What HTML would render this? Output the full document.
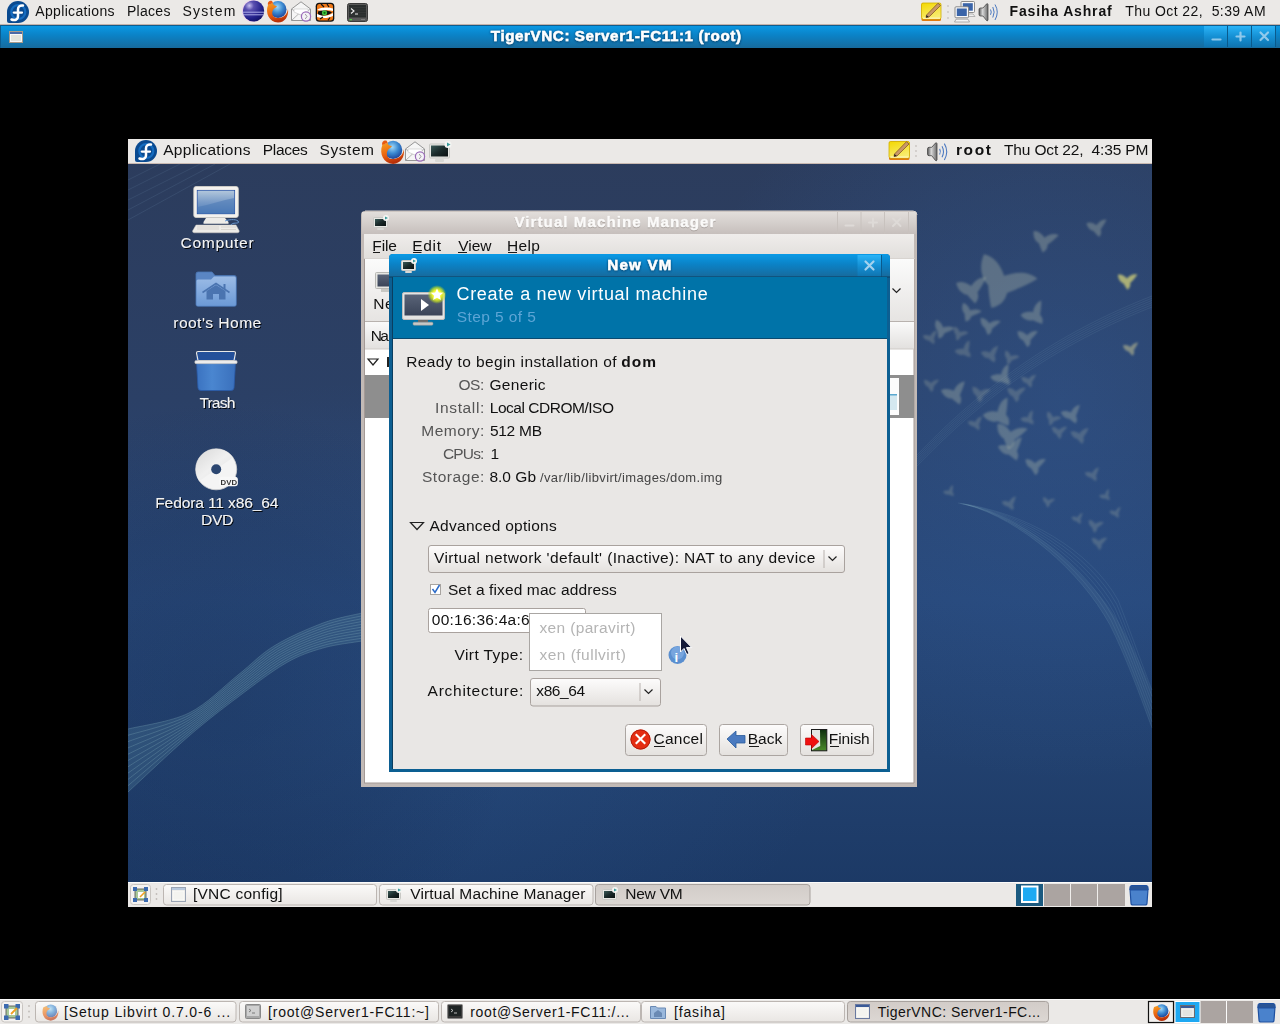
<!DOCTYPE html>
<html><head><meta charset="utf-8"><style>
html,body{margin:0;padding:0;background:#000;width:1280px;height:1024px;overflow:hidden}
svg{display:block}
text{font-family:"Liberation Sans",sans-serif}
</style></head><body>
<svg width="1280" height="1024" viewBox="0 0 1280 1024">
<defs>
  <linearGradient id="vncTitle" x1="0" y1="0" x2="0" y2="1">
    <stop offset="0" stop-color="#0a9ae6"/><stop offset="0.45" stop-color="#0b82c6"/><stop offset="1" stop-color="#176a9c"/>
  </linearGradient>
  <linearGradient id="vncBtn" x1="0" y1="0" x2="0" y2="1">
    <stop offset="0" stop-color="#2ab4f8"/><stop offset="0.5" stop-color="#1590d4"/><stop offset="1" stop-color="#0f74b0"/>
  </linearGradient>
  <linearGradient id="vmmTitle" x1="0" y1="0" x2="0" y2="1">
    <stop offset="0" stop-color="#e2dedb"/><stop offset="1" stop-color="#c6bfbc"/>
  </linearGradient>
  <linearGradient id="menuG" x1="0" y1="0" x2="0" y2="1">
    <stop offset="0" stop-color="#efedeb"/><stop offset="1" stop-color="#e1dedb"/>
  </linearGradient>
  <linearGradient id="toolG" x1="0" y1="0" x2="0" y2="1">
    <stop offset="0" stop-color="#fbfbfb"/><stop offset="1" stop-color="#e6e4e2"/>
  </linearGradient>
  <linearGradient id="hdrG" x1="0" y1="0" x2="0" y2="1">
    <stop offset="0" stop-color="#fafafa"/><stop offset="1" stop-color="#e2e0de"/>
  </linearGradient>
  <linearGradient id="btnG" x1="0" y1="0" x2="0" y2="1">
    <stop offset="0" stop-color="#fdfcfc"/><stop offset="1" stop-color="#e4e1de"/>
  </linearGradient>
  <linearGradient id="taskG" x1="0" y1="0" x2="0" y2="1">
    <stop offset="0" stop-color="#fbfaf9"/><stop offset="1" stop-color="#e9e6e3"/>
  </linearGradient>
  <linearGradient id="taskAct" x1="0" y1="0" x2="0" y2="1">
    <stop offset="0" stop-color="#d2ccc8"/><stop offset="1" stop-color="#dcd7d3"/>
  </linearGradient>
  <linearGradient id="wp1" x1="0" y1="0" x2="0" y2="1">
    <stop offset="0" stop-color="#2c3c5c"/><stop offset="0.34" stop-color="#2b4066"/><stop offset="0.6" stop-color="#274676"/><stop offset="0.8" stop-color="#22416f"/><stop offset="1" stop-color="#1b3864"/>
  </linearGradient>
  <radialGradient id="wp2" cx="0.25" cy="0.75" r="0.45">
    <stop offset="0" stop-color="#3060a0" stop-opacity="0.25"/><stop offset="1" stop-color="#3060a0" stop-opacity="0"/>
  </radialGradient>
  <radialGradient id="wp3" gradientUnits="userSpaceOnUse" cx="1060" cy="400" r="380">
    <stop offset="0" stop-color="#3468b0" stop-opacity="0.32"/><stop offset="0.6" stop-color="#3468b0" stop-opacity="0.15"/><stop offset="1" stop-color="#3468b0" stop-opacity="0"/>
  </radialGradient>
  <filter id="noise" x="0" y="0" width="100%" height="100%">
    <feTurbulence type="fractalNoise" baseFrequency="0.9" numOctaves="2" seed="3" result="n"/>
    <feColorMatrix type="matrix" values="0 0 0 0 0.5  0 0 0 0 0.6  0 0 0 0 0.8  0 0 0 0.12 0"/>
  </filter>
  <linearGradient id="monScr" x1="0" y1="0" x2="1" y2="1">
    <stop offset="0" stop-color="#3a5a58"/><stop offset="0.5" stop-color="#1a2a2a"/><stop offset="1" stop-color="#0a1010"/>
  </linearGradient>
  <linearGradient id="bigScr" x1="0" y1="0" x2="0" y2="1">
    <stop offset="0" stop-color="#5a6478"/><stop offset="1" stop-color="#3a4458"/>
  </linearGradient>
  <radialGradient id="glow" cx="0.5" cy="0.5" r="0.5">
    <stop offset="0" stop-color="#ffff80"/><stop offset="0.45" stop-color="#f4f830"/><stop offset="0.72" stop-color="#d0e820" stop-opacity="0.7"/><stop offset="1" stop-color="#a0d020" stop-opacity="0"/>
  </radialGradient>
  <radialGradient id="eclG" cx="0.3" cy="0.25" r="0.85">
    <stop offset="0" stop-color="#c8c0f0"/><stop offset="0.25" stop-color="#5a50b0"/><stop offset="0.7" stop-color="#22208a"/><stop offset="1" stop-color="#101060"/>
  </radialGradient>
  <radialGradient id="ffGlobe" cx="0.45" cy="0.35" r="0.7">
    <stop offset="0" stop-color="#a0d8f8"/><stop offset="0.5" stop-color="#3a88d0"/><stop offset="1" stop-color="#1a3a90"/>
  </radialGradient>
  <linearGradient id="ffFox" x1="0" y1="0" x2="0.3" y2="1">
    <stop offset="0" stop-color="#f8a020"/><stop offset="0.6" stop-color="#e86010"/><stop offset="1" stop-color="#b83008"/>
  </linearGradient>
  <linearGradient id="compScr" x1="0" y1="0" x2="0" y2="1">
    <stop offset="0" stop-color="#b4c8dc"/><stop offset="0.5" stop-color="#7a9cc8"/><stop offset="1" stop-color="#4a7ab8"/>
  </linearGradient>
  <linearGradient id="folderG" x1="0" y1="0" x2="0" y2="1">
    <stop offset="0" stop-color="#9cbce6"/><stop offset="1" stop-color="#6c9ad6"/>
  </linearGradient>
  <linearGradient id="trashG" x1="0" y1="0" x2="1" y2="0">
    <stop offset="0" stop-color="#3a72c0"/><stop offset="0.4" stop-color="#4a86d0"/><stop offset="1" stop-color="#3a70bc"/>
  </linearGradient>
  <linearGradient id="dvdG" x1="0" y1="0" x2="1" y2="1">
    <stop offset="0" stop-color="#d8d8d8"/><stop offset="0.5" stop-color="#f0f0f0"/><stop offset="1" stop-color="#e0e0e0"/>
  </linearGradient>
  <linearGradient id="notesG" x1="0" y1="0" x2="0.4" y2="1">
    <stop offset="0" stop-color="#f4d800"/><stop offset="1" stop-color="#f8ec70"/>
  </linearGradient>
  <linearGradient id="spkG" x1="0" y1="0" x2="1" y2="0">
    <stop offset="0" stop-color="#5a5a5a"/><stop offset="0.4" stop-color="#d8d8d8"/><stop offset="1" stop-color="#6a6a6a"/>
  </linearGradient>
  <radialGradient id="wpDarkL" gradientUnits="userSpaceOnUse" cx="220" cy="700" r="300">
    <stop offset="0" stop-color="#102040" stop-opacity="0.25"/><stop offset="0.6" stop-color="#102040" stop-opacity="0.15"/><stop offset="1" stop-color="#102040" stop-opacity="0"/>
  </radialGradient>
  <linearGradient id="doorG" x1="0" y1="0" x2="0" y2="1">
    <stop offset="0" stop-color="#0e2e0e"/><stop offset="1" stop-color="#4a8a2a"/>
  </linearGradient>
  <filter id="soft"><feGaussianBlur stdDeviation="0.8"/></filter>
  <filter id="tshadow" x="-5%" y="-30%" width="110%" height="160%">
    <feDropShadow dx="0" dy="0.5" stdDeviation="0.8" flood-color="#002040" flood-opacity="0.8"/>
  </filter>
  <filter id="gshadow" x="-5%" y="-30%" width="110%" height="160%">
    <feDropShadow dx="0" dy="0.5" stdDeviation="0.7" flood-color="#8a817c" flood-opacity="1"/>
  </filter>
  <filter id="dshadow" x="-5%" y="-30%" width="110%" height="160%">
    <feDropShadow dx="1" dy="1" stdDeviation="0.5" flood-color="#000" flood-opacity="0.9"/>
  </filter>
  <g id="vmIcon">
    <!-- 16x16 monitor w/ play badge -->
    <rect x="0.5" y="2.5" width="14" height="10" rx="1" fill="#e8e8e4" stroke="#c8c8c4"/>
    <rect x="2" y="4" width="11" height="7" fill="url(#monScr)"/>
    <rect x="4" y="13" width="7" height="2" rx="1" fill="#d8d8d4"/>
    <circle cx="13" cy="3" r="3" fill="#f4f4f2"/>
    <path d="M12 1.5 L15 3 L12 4.5 Z" fill="#3a9a9a"/>
  </g>
</defs>

<rect width="1280" height="1024" fill="#000"/>

<!-- ================= OUTER TOP PANEL ================= -->
<rect x="0" y="0" width="1280" height="24" fill="#ebe9e7"/>
<rect x="0" y="24" width="1280" height="1" fill="#c4b2aa"/>
<g id="fedoraOuter" transform="translate(7,1)">
  <path d="M11 0 A11 11 0 1 1 11 22 L2 22 A2 2 0 0 1 0 20 L0 11 A11 11 0 0 1 11 0 Z" fill="#0a4a90"/>
  <circle cx="11.3" cy="11" r="7" fill="none" stroke="#1a78d0" stroke-width="2.2" stroke-opacity="0.75"/>
  <path d="M4.5 18.5 C7.5 19.8 11 19 11 15 V8.2 C11 5.5 13 4.2 16 4.6" fill="none" stroke="#fff" stroke-width="2.5" stroke-linecap="round"/>
  <path d="M6.8 11.6 H15" stroke="#fff" stroke-width="2.3" stroke-linecap="round"/>
</g>
<!-- launcher icons -->
<g transform="translate(253,11)">
  <circle r="11" fill="#f0c8f0" fill-opacity="0.7"/>
  <circle cx="0.6" cy="0" r="10.6" fill="url(#eclG)"/>
  <path d="M-10.5 1.2 H11 M-10 3.8 H10.8" stroke="#b8b8f0" stroke-width="0.9"/>
</g>
<g transform="translate(277,11)">
  <circle cx="1" cy="-1.5" r="8.5" fill="url(#ffGlobe)"/>
  <path d="M-9 -6 C-12 2 -8 11 1 11.5 C8 11.5 12 5 11 -2 C10 4 6 7 1 7 C-4 7 -6 3 -4 -1 C-3 -3 -1 -3 0 -5 C-2 -5 -4 -6 -4 -8 C-6 -7 -8 -7 -9 -6 Z" fill="url(#ffFox)"/>
  <path d="M-9 -6 C-10 -9 -7 -11 -5 -10 L-4 -8 Z" fill="#e85a10"/>
</g>
<g transform="translate(291,1)">
  <path d="M0.5 8 L10 0.8 L19.5 8 V19.5 H0.5 Z" fill="#f6f6f6" stroke="#8a8a8a" stroke-width="0.9"/>
  <path d="M0.5 8 L10 14 L19.5 8 M0.5 19.5 L8 12.5" fill="none" stroke="#a0a0a0" stroke-width="0.8"/>
  <path d="M3 8 H17 V11 L10 14 L3 11 Z" fill="#fff" stroke="#c8c8c8" stroke-width="0.6"/>
  <circle cx="15" cy="15.5" r="4.6" fill="#f4f2f6" stroke="#9a6ab8" stroke-width="1.2"/>
  <path d="M14.2 13 L16 15.5 L14.2 18" fill="none" stroke="#888" stroke-width="0.8"/>
</g>
<g transform="translate(315,2)">
  <rect x="0.7" y="0.7" width="18.6" height="19" rx="3.5" fill="#111"/>
  <rect x="2" y="2" width="16" height="16.4" rx="2.5" fill="#f07818"/>
  <path d="M2 8 C6 5 13 5 18 6.5 L18 9 C14 8 11 8 8 9 Z" fill="#fff"/>
  <path d="M2 12 C5 13 8 14 12 13.5 C14 13 16 12 18 11 L18 14 C14 16 8 17 2 15 Z" fill="#fff"/>
  <path d="M3 9.5 C7 8 13 8 17 10.5 C13 14 7 14.5 3 12 Z" fill="#111"/>
  <circle cx="9.5" cy="10.8" r="2.6" fill="#40c040"/>
  <circle cx="9.5" cy="10.8" r="1.1" fill="#107010"/>
  <path d="M6 2 L9 5 M12 2 L14 5 M5 17 L8 15 M13 18.4 L15 15.5" stroke="#111" stroke-width="1.2"/>
</g>
<g transform="translate(347,3)">
  <rect x="0.5" y="0.5" width="20" height="18" rx="2" fill="#5a5a5a" stroke="#3a3a3a"/>
  <rect x="2" y="2" width="17" height="12.5" fill="#2a2e2e"/>
  <path d="M2 4.5 H19 M2 7 H19 M2 9.5 H19 M2 12 H19" stroke="#3a3e3e" stroke-width="0.6"/>
  <path d="M4 5.5 L7 8 L4 10.5 M8 11 H11" stroke="#f0f0f0" stroke-width="1.1" fill="none"/>
  <rect x="2.5" y="16" width="2.5" height="1.3" fill="#50d040"/>
  <rect x="14" y="16" width="4" height="0.8" fill="#888"/>
</g>
<!-- notes icon -->
<g id="notesIco" transform="translate(921,2)">
  <rect x="0.5" y="1" width="19.5" height="18" rx="1.5" fill="#e07a10"/>
  <rect x="0.5" y="1" width="19.5" height="16" rx="1.5" fill="url(#notesG)" stroke="#d0b000" stroke-width="0.8"/>
  <rect x="2" y="15.6" width="17" height="1.2" fill="#fff8c0"/>
  <path d="M5.5 13 L17 1.2 L19.5 3.5 L8 15 L5 15.5 Z" fill="#c89868" stroke="#7a4a20" stroke-width="0.7"/>
  <path d="M5.5 13 L5 15.5 L7.8 15" fill="#222"/>
</g>
<circle cx="948" cy="6" r="0.9" fill="#c8c4c0"/><circle cx="948" cy="12" r="0.9" fill="#c8c4c0"/><circle cx="948" cy="18" r="0.9" fill="#c8c4c0"/>
<g transform="translate(954,1)">
  <rect x="7" y="0.5" width="13.5" height="11" rx="1" fill="#f8f8f8" stroke="#808080" stroke-width="0.9"/>
  <rect x="8.8" y="2.2" width="10" height="7.5" fill="#3a64a8"/>
  <path d="M10 13 H19 L21 15.5 H12 Z" fill="#f0f0f0" stroke="#909090" stroke-width="0.6"/>
  <rect x="1" y="5.8" width="13.5" height="11" rx="1" fill="#f8f8f8" stroke="#808080" stroke-width="0.9"/>
  <rect x="2.8" y="7.5" width="10" height="7.5" fill="#3a64a8"/>
  <path d="M0.5 21 L2 18.2 H14 L15.5 21 Z" fill="#f4f4f4" stroke="#909090" stroke-width="0.7"/>
</g>
<g id="volIco" transform="translate(978,2)">
  <path d="M1 7.5 Q1 6 2.5 6 H5 L8.5 2 Q9.5 1 10 2.5 V18 Q9.5 19.5 8.5 18.5 L5 14 H2.5 Q1 14 1 12.5 Z" fill="url(#spkG)" stroke="#3a3a3a" stroke-width="0.7"/>
  <path d="M12.5 7.5 Q14 10 12.5 12.8 M14.8 5 Q17.5 10 14.8 15.5 M17 2.5 Q21.5 10 17 18" fill="none" stroke="#4a78c0" stroke-width="1"/>
</g>
<!-- ================= TIGERVNC TITLE ================= -->
<rect x="0" y="25" width="1280" height="23" fill="url(#vncTitle)"/>
<rect x="0" y="25" width="1280" height="1" fill="#0e5c8e"/>
<rect x="0" y="25" width="1" height="23" fill="#0e5c8e"/>
<g transform="translate(9,31)">
  <rect x="0.5" y="0.5" width="13" height="11" fill="#dcdcd4" stroke="#a89a8a"/>
  <rect x="1" y="1" width="12" height="2" fill="#4a6aa8"/>
  <rect x="1.5" y="3.5" width="11" height="7" fill="#e4e4dc" stroke="#fff" stroke-width="0.8"/>
</g>
<rect x="1204" y="26" width="71" height="21" fill="url(#vncBtn)"/>
<rect x="1227" y="26" width="1" height="21" fill="#0a5a8c"/>
<rect x="1251" y="26" width="1" height="21" fill="#0a5a8c"/>
<rect x="1275" y="26" width="1" height="21" fill="#0a5a8c"/>
<g stroke="#a4d2ee" stroke-opacity="0.85" stroke-width="2.2" stroke-linecap="round" fill="none">
  <path d="M1212.5 39.5 H1220.5"/>
  <path d="M1236.5 36.5 H1244.5 M1240.5 32.5 V40.5"/>
  <path d="M1260.5 32.5 L1268 40 M1268 32.5 L1260.5 40"/>
</g>

<!-- ================= INNER DESKTOP ================= -->
<g id="desk">
<rect x="128" y="139" width="1024" height="768" fill="url(#wp1)"/>
<rect x="128" y="164" width="1024" height="718" fill="url(#wp2)"/>
<rect x="128" y="164" width="1024" height="718" fill="url(#wp3)"/>
<!-- swirl ribbons -->
<rect x="128" y="164" width="1024" height="718" fill="url(#wpDarkL)"/>
<path d="M128.0 729.0 C138.2 726.3 170.7 722.0 189.0 713.0 C207.3 704.0 223.8 686.2 238.0 675.0 C252.2 663.8 259.8 654.7 274.0 646.0 C288.2 637.3 308.3 628.5 323.0 623.0 C337.7 617.5 355.5 614.7 362.0 613.0 L362.0 641.0 C355.5 642.2 335.7 644.3 323.0 648.0 C310.3 651.7 300.2 654.8 286.0 663.0 C271.8 671.2 254.2 684.8 238.0 697.0 C221.8 709.2 207.3 720.2 189.0 736.0 C170.7 751.8 138.2 782.7 128.0 792.0 Z" fill="#6aa0b4" fill-opacity="0.2"/>
<g fill="none" stroke="#90c0c8" stroke-opacity="0.42" stroke-width="0.6">
<path d="M128.0 729.0 C138.2 726.3 170.7 722.0 189.0 713.0 C207.3 704.0 223.8 686.2 238.0 675.0 C252.2 663.8 259.8 654.7 274.0 646.0 C288.2 637.3 308.3 628.5 323.0 623.0 C337.7 617.5 355.5 614.7 362.0 613.0"/>
<path d="M128.0 735.3 C138.2 732.0 170.7 725.0 189.0 715.3 C207.3 705.6 223.6 688.5 238.0 677.2 C252.4 665.9 261.0 656.3 275.2 647.7 C289.4 639.1 308.5 630.8 323.0 625.5 C337.5 620.2 355.5 617.4 362.0 615.8"/>
<path d="M128.0 741.6 C138.2 737.6 170.7 728.0 189.0 717.6 C207.3 707.2 223.4 690.8 238.0 679.4 C252.6 668.0 262.2 658.0 276.4 649.4 C290.6 640.8 308.7 633.1 323.0 628.0 C337.3 622.9 355.5 620.2 362.0 618.6"/>
<path d="M128.0 747.9 C138.2 743.2 170.7 730.9 189.0 719.9 C207.3 708.9 223.2 693.1 238.0 681.6 C252.8 670.1 263.4 659.6 277.6 651.1 C291.8 642.6 308.9 635.5 323.0 630.5 C337.1 625.5 355.5 622.9 362.0 621.4"/>
<path d="M128.0 754.2 C138.2 748.9 170.7 733.9 189.0 722.2 C207.3 710.5 223.0 695.4 238.0 683.8 C253.0 672.2 264.6 661.3 278.8 652.8 C293.0 644.3 309.1 637.8 323.0 633.0 C336.9 628.2 355.5 625.7 362.0 624.2"/>
<path d="M128.0 760.5 C138.2 754.5 170.7 736.9 189.0 724.5 C207.3 712.1 222.8 697.7 238.0 686.0 C253.2 674.3 265.8 662.9 280.0 654.5 C294.2 646.1 309.3 640.1 323.0 635.5 C336.7 630.9 355.5 628.4 362.0 627.0"/>
<path d="M128.0 766.8 C138.2 760.1 170.7 739.9 189.0 726.8 C207.3 713.7 222.6 700.0 238.0 688.2 C253.4 676.4 267.0 664.6 281.2 656.2 C295.4 647.8 309.5 642.4 323.0 638.0 C336.5 633.6 355.5 631.2 362.0 629.8"/>
<path d="M128.0 773.1 C138.2 765.8 170.7 742.9 189.0 729.1 C207.3 715.3 222.4 702.3 238.0 690.4 C253.6 678.5 268.2 666.2 282.4 657.9 C296.6 649.6 309.7 644.7 323.0 640.5 C336.3 636.3 355.5 633.9 362.0 632.6"/>
<path d="M128.0 779.4 C138.2 771.4 170.7 745.9 189.0 731.4 C207.3 716.9 222.2 704.6 238.0 692.6 C253.8 680.6 269.4 667.9 283.6 659.6 C297.8 651.3 309.9 647.0 323.0 643.0 C336.1 639.0 355.5 636.7 362.0 635.4"/>
<path d="M128.0 785.7 C138.2 777.0 170.7 748.9 189.0 733.7 C207.3 718.6 222.0 706.9 238.0 694.8 C254.0 682.7 270.6 669.5 284.8 661.3 C299.0 653.1 310.1 649.4 323.0 645.5 C335.9 641.6 355.5 639.4 362.0 638.2"/>
<path d="M128.0 792.0 C138.2 782.7 170.7 751.8 189.0 736.0 C207.3 720.2 221.8 709.2 238.0 697.0 C254.2 684.8 271.8 671.2 286.0 663.0 C300.2 654.8 310.3 651.7 323.0 648.0 C335.7 644.3 355.5 642.2 362.0 641.0"/>
</g>
<g fill="none" stroke="#9ac0d0" stroke-opacity="0.14" stroke-width="0.7">
<path d="M917 455.0 C970 400.0 1040 340.0 1152 296.0"/>
<path d="M917 457.2 C970 402.2 1040 342.2 1152 298.2"/>
<path d="M917 459.4 C970 404.4 1040 344.4 1152 300.4"/>
<path d="M917 461.6 C970 406.6 1040 346.6 1152 302.6"/>
<path d="M917 463.8 C970 408.8 1040 348.8 1152 304.8"/>
<path d="M917 466.0 C970 411.0 1040 351.0 1152 307.0"/>
</g>
<g fill="none" stroke="#8ab0d0" stroke-opacity="0.16" stroke-width="0.8"><path d="M128 180 L160 164 M128 190 L180 164 M128 200 L200 164 M128 210 L215 164 M128 220 L230 164"/></g>
<!-- right swoosh -->
<path d="M968 505 C1020 520 1080 570 1110 625 C1125 655 1138 690 1152 728 L1152 690 C1135 650 1118 615 1095 590 C1060 548 1015 515 968 505 Z" fill="#7aa8b8" fill-opacity="0.12"/>
<g fill="none" stroke="#90bcc8" stroke-opacity="0.2" stroke-width="0.6">
<path d="M968.0 505.0 C1020.0 520.0 1080.0 570.0 1110.0 625.0 C1125.0 655.0 1138.0 690.0 1152 728.0"/>
<path d="M966.3 504.7 C1020.8 518.7 1081.7 566.7 1111.3 620.8 C1125.8 650.8 1138.7 685.8 1152 721.7"/>
<path d="M964.7 504.3 C1021.7 517.3 1083.3 563.3 1112.7 616.7 C1126.7 646.7 1139.3 681.7 1152 715.3"/>
<path d="M963.0 504.0 C1022.5 516.0 1085.0 560.0 1114.0 612.5 C1127.5 642.5 1140.0 677.5 1152 709.0"/>
<path d="M961.3 503.7 C1023.3 514.7 1086.7 556.7 1115.3 608.3 C1128.3 638.3 1140.7 673.3 1152 702.7"/>
<path d="M959.7 503.3 C1024.2 513.3 1088.3 553.3 1116.7 604.2 C1129.2 634.2 1141.3 669.2 1152 696.3"/>
<path d="M958.0 503.0 C1025.0 512.0 1090.0 550.0 1118.0 600.0 C1130.0 630.0 1142.0 665.0 1152 690.0"/>
</g>
<!-- birds -->
<g filter="url(#soft)">
<path d="M-20 -9 C-14 -12 -6 -9 -1 -5 C3 -11 10 -17 18 -16 C15 -9 11 -3 7 3 C9 8 8 13 4 17 C0 13 -3 10 -6 6 C-12 5 -18 0 -20 -9 Z" transform="translate(1044,241) rotate(20) scale(0.658)" fill="#b0baa8" fill-opacity="0.36"/>
<path d="M-20 -9 C-14 -12 -6 -9 -1 -5 C3 -11 10 -17 18 -16 C15 -9 11 -3 7 3 C9 8 8 13 4 17 C0 13 -3 10 -6 6 C-12 5 -18 0 -20 -9 Z" transform="translate(1097,228) rotate(0) scale(0.526)" fill="#b0baa8" fill-opacity="0.36"/>
<path d="M-20 -9 C-14 -12 -6 -9 -1 -5 C3 -11 10 -17 18 -16 C15 -9 11 -3 7 3 C9 8 8 13 4 17 C0 13 -3 10 -6 6 C-12 5 -18 0 -20 -9 Z" transform="translate(1001,283) rotate(35) scale(1.526)" fill="#b0baa8" fill-opacity="0.36"/>
<path d="M-20 -9 C-14 -12 -6 -9 -1 -5 C3 -11 10 -17 18 -16 C15 -9 11 -3 7 3 C9 8 8 13 4 17 C0 13 -3 10 -6 6 C-12 5 -18 0 -20 -9 Z" transform="translate(972,290) rotate(0) scale(0.789)" fill="#b0baa8" fill-opacity="0.36"/>
<path d="M-20 -9 C-14 -12 -6 -9 -1 -5 C3 -11 10 -17 18 -16 C15 -9 11 -3 7 3 C9 8 8 13 4 17 C0 13 -3 10 -6 6 C-12 5 -18 0 -20 -9 Z" transform="translate(942,330) rotate(35) scale(0.526)" fill="#b0baa8" fill-opacity="0.36"/>
<path d="M-20 -9 C-14 -12 -6 -9 -1 -5 C3 -11 10 -17 18 -16 C15 -9 11 -3 7 3 C9 8 8 13 4 17 C0 13 -3 10 -6 6 C-12 5 -18 0 -20 -9 Z" transform="translate(959,334) rotate(35) scale(0.395)" fill="#b0baa8" fill-opacity="0.26"/>
<path d="M-20 -9 C-14 -12 -6 -9 -1 -5 C3 -11 10 -17 18 -16 C15 -9 11 -3 7 3 C9 8 8 13 4 17 C0 13 -3 10 -6 6 C-12 5 -18 0 -20 -9 Z" transform="translate(969,313) rotate(35) scale(0.526)" fill="#b0baa8" fill-opacity="0.36"/>
<path d="M-20 -9 C-14 -12 -6 -9 -1 -5 C3 -11 10 -17 18 -16 C15 -9 11 -3 7 3 C9 8 8 13 4 17 C0 13 -3 10 -6 6 C-12 5 -18 0 -20 -9 Z" transform="translate(989,326) rotate(20) scale(0.526)" fill="#b0baa8" fill-opacity="0.36"/>
<path d="M-20 -9 C-14 -12 -6 -9 -1 -5 C3 -11 10 -17 18 -16 C15 -9 11 -3 7 3 C9 8 8 13 4 17 C0 13 -3 10 -6 6 C-12 5 -18 0 -20 -9 Z" transform="translate(1035,315) rotate(-25) scale(0.658)" fill="#b0baa8" fill-opacity="0.36"/>
<path d="M-20 -9 C-14 -12 -6 -9 -1 -5 C3 -11 10 -17 18 -16 C15 -9 11 -3 7 3 C9 8 8 13 4 17 C0 13 -3 10 -6 6 C-12 5 -18 0 -20 -9 Z" transform="translate(1027,338) rotate(10) scale(0.526)" fill="#b0baa8" fill-opacity="0.36"/>
<path d="M-20 -9 C-14 -12 -6 -9 -1 -5 C3 -11 10 -17 18 -16 C15 -9 11 -3 7 3 C9 8 8 13 4 17 C0 13 -3 10 -6 6 C-12 5 -18 0 -20 -9 Z" transform="translate(991,355) rotate(-10) scale(0.474)" fill="#b0baa8" fill-opacity="0.26"/>
<path d="M-20 -9 C-14 -12 -6 -9 -1 -5 C3 -11 10 -17 18 -16 C15 -9 11 -3 7 3 C9 8 8 13 4 17 C0 13 -3 10 -6 6 C-12 5 -18 0 -20 -9 Z" transform="translate(1010,358) rotate(35) scale(0.395)" fill="#b0baa8" fill-opacity="0.26"/>
<path d="M-20 -9 C-14 -12 -6 -9 -1 -5 C3 -11 10 -17 18 -16 C15 -9 11 -3 7 3 C9 8 8 13 4 17 C0 13 -3 10 -6 6 C-12 5 -18 0 -20 -9 Z" transform="translate(965,351) rotate(-25) scale(0.474)" fill="#b0baa8" fill-opacity="0.26"/>
<path d="M-20 -9 C-14 -12 -6 -9 -1 -5 C3 -11 10 -17 18 -16 C15 -9 11 -3 7 3 C9 8 8 13 4 17 C0 13 -3 10 -6 6 C-12 5 -18 0 -20 -9 Z" transform="translate(931,338) rotate(-10) scale(0.395)" fill="#b0baa8" fill-opacity="0.26"/>
<path d="M-20 -9 C-14 -12 -6 -9 -1 -5 C3 -11 10 -17 18 -16 C15 -9 11 -3 7 3 C9 8 8 13 4 17 C0 13 -3 10 -6 6 C-12 5 -18 0 -20 -9 Z" transform="translate(1003,377) rotate(-25) scale(0.579)" fill="#b0baa8" fill-opacity="0.36"/>
<path d="M-20 -9 C-14 -12 -6 -9 -1 -5 C3 -11 10 -17 18 -16 C15 -9 11 -3 7 3 C9 8 8 13 4 17 C0 13 -3 10 -6 6 C-12 5 -18 0 -20 -9 Z" transform="translate(1029,381) rotate(0) scale(0.395)" fill="#b0baa8" fill-opacity="0.26"/>
<path d="M-20 -9 C-14 -12 -6 -9 -1 -5 C3 -11 10 -17 18 -16 C15 -9 11 -3 7 3 C9 8 8 13 4 17 C0 13 -3 10 -6 6 C-12 5 -18 0 -20 -9 Z" transform="translate(1016,394) rotate(10) scale(0.474)" fill="#b0baa8" fill-opacity="0.26"/>
<path d="M-20 -9 C-14 -12 -6 -9 -1 -5 C3 -11 10 -17 18 -16 C15 -9 11 -3 7 3 C9 8 8 13 4 17 C0 13 -3 10 -6 6 C-12 5 -18 0 -20 -9 Z" transform="translate(955,394) rotate(-10) scale(0.658)" fill="#b0baa8" fill-opacity="0.36"/>
<path d="M-20 -9 C-14 -12 -6 -9 -1 -5 C3 -11 10 -17 18 -16 C15 -9 11 -3 7 3 C9 8 8 13 4 17 C0 13 -3 10 -6 6 C-12 5 -18 0 -20 -9 Z" transform="translate(931,385) rotate(10) scale(0.395)" fill="#b0baa8" fill-opacity="0.26"/>
<path d="M-20 -9 C-14 -12 -6 -9 -1 -5 C3 -11 10 -17 18 -16 C15 -9 11 -3 7 3 C9 8 8 13 4 17 C0 13 -3 10 -6 6 C-12 5 -18 0 -20 -9 Z" transform="translate(980,394) rotate(20) scale(0.474)" fill="#b0baa8" fill-opacity="0.26"/>
<path d="M-20 -9 C-14 -12 -6 -9 -1 -5 C3 -11 10 -17 18 -16 C15 -9 11 -3 7 3 C9 8 8 13 4 17 C0 13 -3 10 -6 6 C-12 5 -18 0 -20 -9 Z" transform="translate(1000,415) rotate(-25) scale(0.789)" fill="#b0baa8" fill-opacity="0.36"/>
<path d="M-20 -9 C-14 -12 -6 -9 -1 -5 C3 -11 10 -17 18 -16 C15 -9 11 -3 7 3 C9 8 8 13 4 17 C0 13 -3 10 -6 6 C-12 5 -18 0 -20 -9 Z" transform="translate(1010,436) rotate(20) scale(0.789)" fill="#b0baa8" fill-opacity="0.36"/>
<path d="M-20 -9 C-14 -12 -6 -9 -1 -5 C3 -11 10 -17 18 -16 C15 -9 11 -3 7 3 C9 8 8 13 4 17 C0 13 -3 10 -6 6 C-12 5 -18 0 -20 -9 Z" transform="translate(1012,450) rotate(-10) scale(0.658)" fill="#b0baa8" fill-opacity="0.36"/>
<path d="M-20 -9 C-14 -12 -6 -9 -1 -5 C3 -11 10 -17 18 -16 C15 -9 11 -3 7 3 C9 8 8 13 4 17 C0 13 -3 10 -6 6 C-12 5 -18 0 -20 -9 Z" transform="translate(1029,419) rotate(-25) scale(0.395)" fill="#b0baa8" fill-opacity="0.26"/>
<path d="M-20 -9 C-14 -12 -6 -9 -1 -5 C3 -11 10 -17 18 -16 C15 -9 11 -3 7 3 C9 8 8 13 4 17 C0 13 -3 10 -6 6 C-12 5 -18 0 -20 -9 Z" transform="translate(1052,419) rotate(35) scale(0.395)" fill="#b0baa8" fill-opacity="0.26"/>
<path d="M-20 -9 C-14 -12 -6 -9 -1 -5 C3 -11 10 -17 18 -16 C15 -9 11 -3 7 3 C9 8 8 13 4 17 C0 13 -3 10 -6 6 C-12 5 -18 0 -20 -9 Z" transform="translate(1072,415) rotate(-10) scale(0.526)" fill="#b0baa8" fill-opacity="0.36"/>
<path d="M-20 -9 C-14 -12 -6 -9 -1 -5 C3 -11 10 -17 18 -16 C15 -9 11 -3 7 3 C9 8 8 13 4 17 C0 13 -3 10 -6 6 C-12 5 -18 0 -20 -9 Z" transform="translate(1059,432) rotate(10) scale(0.395)" fill="#b0baa8" fill-opacity="0.26"/>
<path d="M-20 -9 C-14 -12 -6 -9 -1 -5 C3 -11 10 -17 18 -16 C15 -9 11 -3 7 3 C9 8 8 13 4 17 C0 13 -3 10 -6 6 C-12 5 -18 0 -20 -9 Z" transform="translate(1080,436) rotate(0) scale(0.474)" fill="#b0baa8" fill-opacity="0.26"/>
<path d="M-20 -9 C-14 -12 -6 -9 -1 -5 C3 -11 10 -17 18 -16 C15 -9 11 -3 7 3 C9 8 8 13 4 17 C0 13 -3 10 -6 6 C-12 5 -18 0 -20 -9 Z" transform="translate(976,424) rotate(-10) scale(0.395)" fill="#b0baa8" fill-opacity="0.26"/>
<path d="M-20 -9 C-14 -12 -6 -9 -1 -5 C3 -11 10 -17 18 -16 C15 -9 11 -3 7 3 C9 8 8 13 4 17 C0 13 -3 10 -6 6 C-12 5 -18 0 -20 -9 Z" transform="translate(1035,466) rotate(10) scale(0.526)" fill="#b0baa8" fill-opacity="0.36"/>
<path d="M-20 -9 C-14 -12 -6 -9 -1 -5 C3 -11 10 -17 18 -16 C15 -9 11 -3 7 3 C9 8 8 13 4 17 C0 13 -3 10 -6 6 C-12 5 -18 0 -20 -9 Z" transform="translate(1093,475) rotate(-10) scale(0.395)" fill="#b0baa8" fill-opacity="0.26"/>
<path d="M-20 -9 C-14 -12 -6 -9 -1 -5 C3 -11 10 -17 18 -16 C15 -9 11 -3 7 3 C9 8 8 13 4 17 C0 13 -3 10 -6 6 C-12 5 -18 0 -20 -9 Z" transform="translate(1106,496) rotate(-25) scale(0.316)" fill="#b0baa8" fill-opacity="0.26"/>
<path d="M-20 -9 C-14 -12 -6 -9 -1 -5 C3 -11 10 -17 18 -16 C15 -9 11 -3 7 3 C9 8 8 13 4 17 C0 13 -3 10 -6 6 C-12 5 -18 0 -20 -9 Z" transform="translate(1010,504) rotate(-10) scale(0.395)" fill="#b0baa8" fill-opacity="0.26"/>
<path d="M-20 -9 C-14 -12 -6 -9 -1 -5 C3 -11 10 -17 18 -16 C15 -9 11 -3 7 3 C9 8 8 13 4 17 C0 13 -3 10 -6 6 C-12 5 -18 0 -20 -9 Z" transform="translate(1048,502) rotate(20) scale(0.316)" fill="#b0baa8" fill-opacity="0.26"/>
<path d="M-20 -9 C-14 -12 -6 -9 -1 -5 C3 -11 10 -17 18 -16 C15 -9 11 -3 7 3 C9 8 8 13 4 17 C0 13 -3 10 -6 6 C-12 5 -18 0 -20 -9 Z" transform="translate(1095,526) rotate(20) scale(0.395)" fill="#b0baa8" fill-opacity="0.26"/>
<path d="M-20 -9 C-14 -12 -6 -9 -1 -5 C3 -11 10 -17 18 -16 C15 -9 11 -3 7 3 C9 8 8 13 4 17 C0 13 -3 10 -6 6 C-12 5 -18 0 -20 -9 Z" transform="translate(1099,543) rotate(10) scale(0.395)" fill="#b0baa8" fill-opacity="0.26"/>
<path d="M-20 -9 C-14 -12 -6 -9 -1 -5 C3 -11 10 -17 18 -16 C15 -9 11 -3 7 3 C9 8 8 13 4 17 C0 13 -3 10 -6 6 C-12 5 -18 0 -20 -9 Z" transform="translate(1078,519) rotate(-10) scale(0.316)" fill="#b0baa8" fill-opacity="0.26"/>
<path d="M-20 -9 C-14 -12 -6 -9 -1 -5 C3 -11 10 -17 18 -16 C15 -9 11 -3 7 3 C9 8 8 13 4 17 C0 13 -3 10 -6 6 C-12 5 -18 0 -20 -9 Z" transform="translate(1116,513) rotate(-10) scale(0.316)" fill="#b0baa8" fill-opacity="0.26"/>
<path d="M-20 -9 C-14 -12 -6 -9 -1 -5 C3 -11 10 -17 18 -16 C15 -9 11 -3 7 3 C9 8 8 13 4 17 C0 13 -3 10 -6 6 C-12 5 -18 0 -20 -9 Z" transform="translate(950,492) rotate(-25) scale(0.316)" fill="#b0baa8" fill-opacity="0.26"/>
<path d="M-20 -9 C-14 -12 -6 -9 -1 -5 C3 -11 10 -17 18 -16 C15 -9 11 -3 7 3 C9 8 8 13 4 17 C0 13 -3 10 -6 6 C-12 5 -18 0 -20 -9 Z" transform="translate(1127,281) rotate(10) scale(0.5)" fill="#c8c878" fill-opacity="0.8"/>
<path d="M-20 -9 C-14 -12 -6 -9 -1 -5 C3 -11 10 -17 18 -16 C15 -9 11 -3 7 3 C9 8 8 13 4 17 C0 13 -3 10 -6 6 C-12 5 -18 0 -20 -9 Z" transform="translate(1131,349) rotate(0) scale(0.4)" fill="#b8b890" fill-opacity="0.6"/>
</g>

<!-- inner top panel -->
<rect x="128" y="139" width="1024" height="24" fill="#ebe9e7"/>
<rect x="128" y="163" width="1024" height="1" fill="#c9b9b1"/>
<g transform="translate(135,140)">
  <path d="M11 0 A11 11 0 1 1 11 22 L2 22 A2 2 0 0 1 0 20 L0 11 A11 11 0 0 1 11 0 Z" fill="#0a4a90"/>
  <circle cx="11.3" cy="11" r="7" fill="none" stroke="#1a78d0" stroke-width="2.2" stroke-opacity="0.75"/>
  <path d="M4.5 18.5 C7.5 19.8 11 19 11 15 V8.2 C11 5.5 13 4.2 16 4.6" fill="none" stroke="#fff" stroke-width="2.5" stroke-linecap="round"/>
  <path d="M6.8 11.6 H15" stroke="#fff" stroke-width="2.3" stroke-linecap="round"/>
</g>
<g transform="translate(392,151.5) scale(1.08)">
  <circle cx="1" cy="-1.5" r="8.5" fill="url(#ffGlobe)"/>
  <path d="M-9 -6 C-12 2 -8 11 1 11.5 C8 11.5 12 5 11 -2 C10 4 6 7 1 7 C-4 7 -6 3 -4 -1 C-3 -3 -1 -3 0 -5 C-2 -5 -4 -6 -4 -8 C-6 -7 -8 -7 -9 -6 Z" fill="url(#ffFox)"/>
  <path d="M-9 -6 C-10 -9 -7 -11 -5 -10 L-4 -8 Z" fill="#e85a10"/>
</g>
<g transform="translate(405,141)">
  <path d="M0.5 8 L10 0.8 L19.5 8 V19.5 H0.5 Z" fill="#f6f6f6" stroke="#8a8a8a" stroke-width="0.9"/>
  <path d="M0.5 8 L10 14 L19.5 8 M0.5 19.5 L8 12.5" fill="none" stroke="#a0a0a0" stroke-width="0.8"/>
  <path d="M3 8 H17 V11 L10 14 L3 11 Z" fill="#fff" stroke="#c8c8c8" stroke-width="0.6"/>
  <circle cx="15" cy="15.5" r="4.6" fill="#f4f2f6" stroke="#9a6ab8" stroke-width="1.2"/>
  <path d="M14.2 13 L16 15.5 L14.2 18" fill="none" stroke="#888" stroke-width="0.8"/>
</g>
<g transform="translate(429,141)">
  <rect x="0.5" y="3" width="20" height="14" rx="1" fill="#e8e8e4" stroke="#c8c8c4"/>
  <rect x="2" y="4.5" width="17" height="11" fill="url(#monScr)"/>
  <rect x="6" y="18" width="9" height="3" rx="1" fill="#d8d8d4"/>
  <circle cx="19" cy="3.5" r="3.5" fill="#f4f4f2"/>
  <path d="M18 1.5 L21.5 3.5 L18 5.5 Z" fill="#3a9a9a"/>
</g>
<g transform="translate(888.5,140.5)">
  <rect x="0.5" y="1" width="20.5" height="18.5" rx="1.5" fill="#e07a10"/>
  <rect x="0.5" y="1" width="20.5" height="16.5" rx="1.5" fill="url(#notesG)" stroke="#d0b000" stroke-width="0.8"/>
  <rect x="2" y="16" width="18" height="1.2" fill="#fff8c0"/>
  <path d="M6 13.5 L18 1.2 L20.5 3.5 L8.5 15.5 L5.5 16 Z" fill="#c89868" stroke="#7a4a20" stroke-width="0.7"/>
  <path d="M6 13.5 L5.5 16 L8.3 15.5" fill="#222"/>
</g>
<circle cx="916" cy="146" r="0.9" fill="#c8c4c0"/><circle cx="916" cy="151" r="0.9" fill="#c8c4c0"/><circle cx="916" cy="156" r="0.9" fill="#c8c4c0"/>
<g transform="translate(926.5,141) scale(1.05)">
  <path d="M1 7.5 Q1 6 2.5 6 H5 L8.5 2 Q9.5 1 10 2.5 V18 Q9.5 19.5 8.5 18.5 L5 14 H2.5 Q1 14 1 12.5 Z" fill="url(#spkG)" stroke="#3a3a3a" stroke-width="0.7"/>
  <path d="M12.5 7.5 Q14 10 12.5 12.8 M14.8 5 Q17.5 10 14.8 15.5 M17 2.5 Q21.5 10 17 18" fill="none" stroke="#4a78c0" stroke-width="1"/>
</g>

<!-- desktop icons -->
<g id="computerIcon">
  <rect x="193.8" y="186.5" width="44.5" height="31" rx="2.2" fill="#f4f2ee" stroke="#d8d4cc" stroke-width="0.8"/>
  <rect x="197.2" y="190.3" width="37.5" height="23.5" fill="url(#compScr)" stroke="#1a48a0" stroke-width="0.7"/>
  <path d="M197.6 207 C210 205 222 200 234.4 198 V213.4 H197.6 Z" fill="#4a78b4" fill-opacity="0.55"/>
  <path d="M206 218 H225 L228.5 222 V223.8 H203.5 V222 Z" fill="#eeece8"/>
  <path d="M196 225 H236 L239.3 231 Q239.3 232.8 237.5 232.8 H194.2 Q192.5 232.8 192.5 231 Z" fill="#eeece8" stroke="#c8c4bc" stroke-width="0.5"/>
  <path d="M197 227 H219 M197 229 H219 M221 227 H236 M221 229.5 H236" stroke="#d0ccc4" stroke-width="0.7"/>
  <path d="M225 221 C230 219 238 219 238.5 222 C239 224 232 222 231 225" fill="none" stroke="#6a98d0" stroke-width="1"/>
</g>
<g id="homeIcon">
  <path d="M196 274 Q196 272 198 272 H212 L215 275.5 H234.5 Q236.3 275.5 236.3 277.5 V304.5 Q236.3 306.3 234.5 306.3 H197.8 Q196 306.3 196 304.5 Z" fill="#5a86c4" stroke="#4a76b4" stroke-width="0.8"/>
  <path d="M196.5 281 Q196.5 279.5 198 279.5 H211 L214 276.5 H234.3 Q235.8 276.5 235.8 278 V304.5 Q235.8 305.8 234.5 305.8 H197.8 Q196.5 305.8 196.5 304.5 Z" fill="url(#folderG)"/>
  <path d="M202.5 292.5 L216 283.5 L229.5 292.5" fill="none" stroke="#4a74b0" stroke-width="1.6"/>
  <rect x="223.5" y="284" width="2" height="5" fill="#4a74b0"/>
  <path d="M206.5 291 L216 285 L225.5 291 V299.5 H219 V294 H213 V299.5 H206.5 Z" fill="#4a74b0"/>
</g>
<g id="trashIcon">
  <path d="M196.5 362 L198 388 Q198.3 390.5 201 390.5 H231 Q233.7 390.5 234 388 L235.5 362 Z" fill="url(#trashG)" stroke="#2a5aa8" stroke-width="0.8"/>
  <path d="M198 352 Q198.5 351 200 351 H232 Q233.5 351 234 352 L236.5 361 H195.5 Z" fill="#24509a"/>
  <path d="M196.5 353 L198 360.5 H234 L235.5 353 Q235.5 351.5 234 351.5 H198 Q196.5 351.5 196.5 353 Z" fill="none" stroke="#e8e8e8" stroke-width="1.2"/>
  <rect x="194.8" y="360.5" width="42.4" height="3.2" rx="1.2" fill="#ececec" stroke="#b0b0b0" stroke-width="0.5"/>
</g>
<g id="dvdIcon">
  <circle cx="216.2" cy="469.3" r="20.5" fill="#f4f4f4" stroke="#d0d0d0" stroke-width="0.8"/>
  <path d="M216.2 469.3 L232.99 457.54 A20.5 20.5 0 0 0 199.41 481.06 Z" fill="url(#dvdG)"/>
  <circle cx="216.2" cy="469.3" r="5" fill="#2b4670"/>
  <rect x="219.3" y="476.8" width="18.6" height="9.4" rx="3" fill="#f8f8f8"/>
  <text x="220.6" y="484.9" font-size="7.8" font-weight="bold" fill="#333" font-family="Liberation Sans" opacity="0.999">DVD</text>
</g>

<!-- inner bottom panel -->
<rect x="128" y="882" width="1024" height="25" fill="#ebe9e7"/>
<rect x="128" y="882" width="1024" height="1" fill="#fbfbfb"/>
<rect x="130.5" y="884.5" width="20" height="20" rx="3" fill="#f4f2f0" stroke="#c8c4c0"/>
<g transform="translate(133,887)">
  <rect x="2" y="2" width="11" height="11" fill="#a8c898" stroke="#4a4a4a" stroke-width="0.8"/>
  <rect x="5" y="5" width="6" height="6" fill="#fff"/>
  <rect x="0" y="0" width="4" height="4" fill="#3a6ab0"/><rect x="11" y="0" width="4" height="4" fill="#3a6ab0"/>
  <rect x="0" y="11" width="4" height="4" fill="#3a6ab0"/><rect x="11" y="11" width="4" height="4" fill="#3a6ab0"/>
  <path d="M7 10 L12 5" stroke="#f0a020" stroke-width="1.6"/>
</g>
<circle cx="156.5" cy="889" r="0.9" fill="#c0bcb8"/><circle cx="156.5" cy="894" r="0.9" fill="#c0bcb8"/><circle cx="156.5" cy="899" r="0.9" fill="#c0bcb8"/>
<rect x="163.5" y="884.5" width="213" height="20.5" rx="3" fill="url(#taskG)" stroke="#bcb6b2"/>
<g transform="translate(171,887)">
  <rect x="0.5" y="0.5" width="14" height="14" fill="#e8e8e4" stroke="#9aa4b4"/>
  <rect x="1" y="1" width="13" height="2" fill="#b8c8dc"/>
  <rect x="2" y="4" width="11" height="9" fill="#f4f4f0" stroke="#fff" stroke-width="0.6"/>
</g>
<rect x="379.5" y="884.5" width="213.5" height="20.5" rx="3" fill="url(#taskG)" stroke="#bcb6b2"/>
<use href="#vmIcon" transform="translate(386,887)"/>
<rect x="595.5" y="884.5" width="214.5" height="20.5" rx="3" fill="url(#taskAct)" stroke="#a8a29e"/>
<use href="#vmIcon" transform="translate(602,887)"/>
<!-- workspace switcher -->
<rect x="1016" y="884" width="109" height="22" fill="#aba4a1"/>
<rect x="1016" y="884" width="27" height="22" fill="#1b5a80"/>
<rect x="1022" y="886.5" width="15.5" height="15.5" fill="#1eaaf2" stroke="#fff" stroke-width="2"/>
<rect x="1070" y="884" width="1" height="22" fill="#f0eeec"/>
<rect x="1097" y="884" width="1" height="22" fill="#f0eeec"/>
<rect x="1043" y="884" width="1" height="22" fill="#f0eeec"/>
<g transform="translate(1129,885)">
  <path d="M1 4 L2 18 Q2 20 4 20 H16 Q18 20 18 18 L19 4 Z" fill="#4a82cc" stroke="#1e50a0" stroke-width="1.2"/>
  <path d="M1 2 Q1 0.5 3 0.5 H17 Q19 0.5 19 2 V5 H1 Z" fill="#2a5494" stroke="#1e50a0" stroke-width="1"/>
</g>
</g>

<!-- ================= VMM WINDOW ================= -->
<g id="vmm">
<path d="M361 215 Q361 211 365 211 H913 Q917 211 917 215 V787 H361 Z" fill="#c2bab6"/>
<rect x="362" y="212" width="554" height="22" fill="url(#vmmTitle)"/>
<path d="M365 211 H913 Q917 211 917 215" fill="none" stroke="#d8d2ce" stroke-width="1"/>
<use href="#vmIcon" transform="translate(373,215)"/>
<g stroke="#c8c2be" stroke-width="1">
  <path d="M837.5 212 V234 M861 212 V234 M884.5 212 V234 M908.5 212 V234"/>
</g>
<g stroke="#dedad7" stroke-width="2" stroke-linecap="round" fill="none">
  <path d="M845.5 225.5 H853.5"/>
  <path d="M869 222.5 H877 M873 218.5 V226.5"/>
  <path d="M893 218.5 L900.5 226 M900.5 218.5 L893 226"/>
</g>
<rect x="364" y="234" width="550" height="24.5" fill="url(#menuG)"/>
<rect x="364.5" y="258" width="550" height="1" fill="#d8d4d0"/>
<rect x="365" y="259" width="549" height="524" fill="#ffffff"/>
<rect x="364" y="259" width="1" height="524" fill="#a49a96"/>
<rect x="364" y="782.5" width="550" height="1" fill="#a49a96"/>
<rect x="913.5" y="259" width="1" height="524" fill="#a49a96"/>
<rect x="365" y="259" width="549" height="62.5" fill="url(#toolG)"/>
<rect x="365" y="321" width="549" height="1.2" fill="#b8b2ae"/>
<g transform="translate(375,272)">
  <rect x="0.5" y="0.5" width="22" height="16" rx="1" fill="#e6e6e2" stroke="#b8b8b4"/>
  <rect x="2.5" y="2.5" width="18" height="12" fill="url(#bigScr)"/>
  <rect x="6" y="17" width="11" height="3" fill="#c8c8c4"/>
</g>
<path d="M892.5 288.5 L896.5 292.5 L900.5 288.5" fill="none" stroke="#222" stroke-width="1.2"/>
<rect x="365" y="322" width="549" height="27" fill="url(#hdrG)"/>
<rect x="365" y="348.5" width="549" height="1" fill="#d0ccc8"/>
<path d="M368 359 H378 L373 365 Z" fill="none" stroke="#222" stroke-width="1.2"/>
<rect x="387" y="357" width="2" height="10" fill="#222"/>
<rect x="365" y="375" width="549" height="43" fill="#8e8e8e"/>
<rect x="890" y="378" width="9" height="37" fill="#fcfcfc"/>
<rect x="890" y="394" width="7" height="16" fill="#d4e8f0"/>
<rect x="890" y="394" width="7" height="1.5" fill="#5aa8d0"/>
<g opacity="0.999">
<text x="514.50" y="227.20" font-size="15.2" font-weight="bold" fill="#fbfaf9" font-family="Liberation Sans" style="letter-spacing:1.016px;white-space:pre" filter="url(#gshadow)" stroke="#fbfaf9" stroke-width="0.5">Virtual Machine Manager</text>
<text x="372.36" y="250.80" font-size="15.5" font-weight="normal" fill="#111" font-family="Liberation Sans" style="letter-spacing:-0.158px;white-space:pre" >File</text>
<text x="412.16" y="250.80" font-size="15.5" font-weight="normal" fill="#111" font-family="Liberation Sans" style="letter-spacing:0.699px;white-space:pre" >Edit</text>
<text x="458.30" y="250.80" font-size="15.5" font-weight="normal" fill="#111" font-family="Liberation Sans" style="letter-spacing:-0.046px;white-space:pre" >View</text>
<text x="507.06" y="250.80" font-size="15.5" font-weight="normal" fill="#111" font-family="Liberation Sans" style="letter-spacing:0.274px;white-space:pre" >Help</text>
<text x="373.36" y="308.70" font-size="15.5" font-weight="normal" fill="#111" font-family="Liberation Sans" style="letter-spacing:0.386px;white-space:pre" >Ne</text>
<text x="370.76" y="341.00" font-size="15.5" font-weight="normal" fill="#111" font-family="Liberation Sans" style="letter-spacing:-1.634px;white-space:pre" >Na</text>
</g>
</g>

<!-- ================= NEW VM DIALOG ================= -->
<g id="dlg">
<path d="M389 258 Q389 254 393 254 H886 Q890 254 890 258 V772 H389 Z" fill="#0c5f92"/>
<path d="M389 277 V258 Q389 254 393 254 H886 Q890 254 890 258 V277 Z" fill="url(#vncTitle)"/>
<rect x="857.5" y="255" width="23.5" height="21.5" fill="url(#vncBtn)"/>
<rect x="881" y="255" width="1" height="22" fill="#0a5a8c"/>
<path d="M865.5 261.5 L873.5 269.5 M873.5 261.5 L865.5 269.5" stroke="#a4d2ee" stroke-width="2.2" stroke-linecap="round"/>
<use href="#vmIcon" transform="translate(401,258)"/>
<rect x="389" y="276.5" width="501" height="1" fill="#0a3e60"/>
<rect x="392" y="277" width="495" height="492" fill="#e9e7e5"/>
<rect x="392" y="277" width="495" height="61.5" fill="#0073a8"/>
<rect x="392" y="338" width="495" height="1" fill="#0a4a70"/>
<rect x="392" y="277" width="1" height="492" fill="#0a3e60"/>
<!-- big header icon -->
<g transform="translate(402,292)">
  <rect x="0.5" y="0.5" width="42" height="27" rx="1.5" fill="#e4e4e2" stroke="#bdbdbd"/>
  <rect x="2.5" y="2.5" width="38" height="21" fill="url(#bigScr)"/>
  <path d="M19 7 L27 13 L19 19 Z" fill="#fff"/>
  <rect x="16" y="28" width="10" height="2.5" fill="#6a6a6a"/>
  <rect x="11" y="30.2" width="20" height="3" rx="1.2" fill="#c8c8c6" stroke="#a09890" stroke-width="0.5"/>
  <circle cx="35" cy="2.5" r="9.5" fill="url(#glow)"/>
  <path d="M35 -3.6 L36.8 0.4 L41.2 0.8 L37.9 3.7 L38.9 8 L35 5.8 L31.1 8 L32.1 3.7 L28.8 0.8 L33.2 0.4 Z" fill="#fff"/>
</g>
<!-- expander -->
<path d="M410.5 522.5 H423.5 L417 529.5 Z" fill="none" stroke="#222" stroke-width="1.2"/>
<!-- network combo -->
<rect x="428.5" y="545.5" width="416" height="27" rx="2.5" fill="url(#btnG)" stroke="#a9a29e"/>
<rect x="823.5" y="550" width="1" height="18" fill="#b8b2ae"/>
<path d="M828.5 556.5 L832.5 560.5 L836.5 556.5" fill="none" stroke="#222" stroke-width="1.2"/>
<!-- checkbox -->
<rect x="430.5" y="584.5" width="10" height="10" fill="#fff" stroke="#a8a4a0"/>
<path d="M432.5 589 L435 592.5 L439.5 585" fill="none" stroke="#2a6ac8" stroke-width="1.5"/>
<!-- mac entry -->
<rect x="428.5" y="608.5" width="157" height="24" rx="2" fill="#fff" stroke="#a9a29e"/>
<!-- arch combo -->
<rect x="530.5" y="678.5" width="130" height="27.5" rx="2.5" fill="url(#btnG)" stroke="#a9a29e"/>
<rect x="639.5" y="683" width="1" height="18" fill="#b8b2ae"/>
<path d="M644.5 689.5 L648.5 693.5 L652.5 689.5" fill="none" stroke="#222" stroke-width="1.2"/>
<!-- popup -->
<rect x="529.5" y="613.5" width="132" height="57" fill="#fff" stroke="#a9a6a3"/>
<!-- info icon -->
<circle cx="677.5" cy="655" r="9" fill="#5a8fd0"/>
<circle cx="677.5" cy="653" r="6.5" fill="#8ab4e8" fill-opacity="0.6"/>
<text x="674.5" y="662" font-size="13" font-weight="bold" fill="#fff" font-family="Liberation Serif">i</text>
<!-- buttons -->
<rect x="625.5" y="724.5" width="81" height="31" rx="3" fill="url(#btnG)" stroke="#aba5a1"/>
<rect x="719.5" y="724.5" width="68" height="31" rx="3" fill="url(#btnG)" stroke="#aba5a1"/>
<rect x="800.5" y="724.5" width="73" height="31" rx="3" fill="url(#btnG)" stroke="#aba5a1"/>
<g transform="translate(640.5,739.5)">
  <circle r="10" fill="#e42c12"/>
  <circle r="9.6" fill="none" stroke="#b01a0a" stroke-width="0.9"/>
  <path d="M-4 -4.5 L4 3.5 M4 -4.5 L-4 3.5" stroke="#fff" stroke-width="2.1" stroke-linecap="square"/>
</g>
<path d="M727 739 L736 731 V735.5 H745 V743 H736 V748 Z" fill="#4a7ac0" stroke="#2a5a9a" stroke-width="0.8"/>
<g transform="translate(805,729)">
  <rect x="6.5" y="0.5" width="15.3" height="21.3" fill="url(#doorG)" stroke="#1a1a1a" stroke-width="1"/>
  <path d="M7 1 H15 L15.2 17 L7 21 Z" fill="#e4e6e4"/>
  <path d="M0.5 9 H6.5 V5.5 L14 12.5 L6.5 19.5 V16 H0.5 Z" fill="#f01010" stroke="#b00" stroke-width="0.6"/>
</g>
<g stroke="#1a1a1a" stroke-width="1">
  <path d="M654 746.5 H665"/>
  <path d="M749 746.5 H759"/>
  <path d="M830 746.5 H839"/>
</g>
<g opacity="0.999">
<text x="35.20" y="16.00" font-size="14" font-weight="normal" fill="#111" font-family="Liberation Sans" style="letter-spacing:0.357px;white-space:pre" >Applications</text>
<text x="126.88" y="16.00" font-size="14" font-weight="normal" fill="#111" font-family="Liberation Sans" style="letter-spacing:0.304px;white-space:pre" >Places</text>
<text x="182.44" y="16.00" font-size="14" font-weight="normal" fill="#111" font-family="Liberation Sans" style="letter-spacing:1.253px;white-space:pre" >System</text>
<text x="1009.56" y="16.00" font-size="14" font-weight="bold" fill="#111" font-family="Liberation Sans" style="letter-spacing:0.838px;white-space:pre" >Fasiha Ashraf</text>
<text x="1125.22" y="16.00" font-size="14" font-weight="normal" fill="#111" font-family="Liberation Sans" style="letter-spacing:0.423px;white-space:pre" >Thu Oct 22,  5:39 AM</text>
<text x="490.85" y="41.00" font-size="15.2" font-weight="bold" fill="#fff" font-family="Liberation Sans" style="letter-spacing:0.582px;white-space:pre" filter="url(#tshadow)" stroke="#fff" stroke-width="0.45">TigerVNC: Server1-FC11:1 (root)</text>
<text x="163.20" y="155.00" font-size="15.5" font-weight="normal" fill="#111" font-family="Liberation Sans" style="letter-spacing:0.335px;white-space:pre" >Applications</text>
<text x="262.76" y="155.00" font-size="15.5" font-weight="normal" fill="#111" font-family="Liberation Sans" style="letter-spacing:-0.304px;white-space:pre" >Places</text>
<text x="319.58" y="155.00" font-size="15.5" font-weight="normal" fill="#111" font-family="Liberation Sans" style="letter-spacing:0.544px;white-space:pre" >System</text>
<text x="955.97" y="155.00" font-size="15.5" font-weight="bold" fill="#111" font-family="Liberation Sans" style="letter-spacing:1.616px;white-space:pre" >root</text>
<text x="1003.99" y="155.00" font-size="15.5" font-weight="normal" fill="#111" font-family="Liberation Sans" style="letter-spacing:-0.151px;white-space:pre" >Thu Oct 22,  4:35 PM</text>
<text x="180.53" y="248.30" font-size="15.5" font-weight="normal" fill="#f4f4f4" font-family="Liberation Sans" style="letter-spacing:0.717px;white-space:pre" filter="url(#dshadow)">Computer</text>
<text x="173.27" y="327.70" font-size="15.5" font-weight="normal" fill="#f4f4f4" font-family="Liberation Sans" style="letter-spacing:0.482px;white-space:pre" filter="url(#dshadow)">root&#39;s Home</text>
<text x="199.39" y="407.70" font-size="15.5" font-weight="normal" fill="#f4f4f4" font-family="Liberation Sans" style="letter-spacing:-0.791px;white-space:pre" filter="url(#dshadow)">Trash</text>
<text x="155.26" y="507.80" font-size="15.5" font-weight="normal" fill="#f4f4f4" font-family="Liberation Sans" style="letter-spacing:-0.101px;white-space:pre" filter="url(#dshadow)">Fedora 11 x86_64</text>
<text x="201.06" y="524.50" font-size="15.5" font-weight="normal" fill="#f4f4f4" font-family="Liberation Sans" style="letter-spacing:-0.316px;white-space:pre" filter="url(#dshadow)">DVD</text>
<text x="607.29" y="270.20" font-size="15.2" font-weight="bold" fill="#fff" font-family="Liberation Sans" style="letter-spacing:1.179px;white-space:pre" filter="url(#tshadow)" stroke="#fff" stroke-width="0.45">New VM</text>
<text x="456.50" y="300.00" font-size="18" font-weight="normal" fill="#ffffff" font-family="Liberation Sans" style="letter-spacing:0.668px;white-space:pre" >Create a new virtual machine</text>
<text x="456.78" y="321.50" font-size="15.5" font-weight="normal" fill="#5ea6d6" font-family="Liberation Sans" style="letter-spacing:0.421px;white-space:pre" >Step 5 of 5</text>
<text x="406.16" y="367.30" font-size="15.5" font-weight="normal" fill="#111" font-family="Liberation Sans" style="letter-spacing:0.388px;white-space:pre" >Ready to begin installation of</text>
<text x="621.18" y="367.30" font-size="15.5" font-weight="bold" fill="#111" font-family="Liberation Sans" style="letter-spacing:1.009px;white-space:pre" >dom</text>
<text x="458.38" y="389.80" font-size="15.5" font-weight="normal" fill="#555" font-family="Liberation Sans" style="letter-spacing:-0.410px;white-space:pre" >OS:</text>
<text x="489.53" y="389.80" font-size="15.5" font-weight="normal" fill="#111" font-family="Liberation Sans" style="letter-spacing:0.302px;white-space:pre" >Generic</text>
<text x="435.00" y="413.00" font-size="15.5" font-weight="normal" fill="#555" font-family="Liberation Sans" style="letter-spacing:0.651px;white-space:pre" >Install:</text>
<text x="489.76" y="413.00" font-size="15.5" font-weight="normal" fill="#111" font-family="Liberation Sans" style="letter-spacing:-0.474px;white-space:pre" >Local CDROM/ISO</text>
<text x="421.36" y="436.30" font-size="15.5" font-weight="normal" fill="#555" font-family="Liberation Sans" style="letter-spacing:0.453px;white-space:pre" >Memory:</text>
<text x="489.88" y="436.30" font-size="15.5" font-weight="normal" fill="#111" font-family="Liberation Sans" style="letter-spacing:-0.254px;white-space:pre" >512 MB</text>
<text x="443.03" y="459.00" font-size="15.5" font-weight="normal" fill="#555" font-family="Liberation Sans" style="letter-spacing:-0.861px;white-space:pre" >CPUs:</text>
<text x="490.42" y="459.00" font-size="15.5" font-weight="normal" fill="#111" font-family="Liberation Sans" style="letter-spacing:0.000px;white-space:pre" >1</text>
<text x="421.98" y="482.00" font-size="15.5" font-weight="normal" fill="#555" font-family="Liberation Sans" style="letter-spacing:0.541px;white-space:pre" >Storage:</text>
<text x="489.38" y="482.00" font-size="15.5" font-weight="normal" fill="#111" font-family="Liberation Sans" style="letter-spacing:0.030px;white-space:pre" >8.0 Gb</text>
<text x="540.00" y="482.00" font-size="13" font-weight="normal" fill="#444" font-family="Liberation Sans" style="letter-spacing:0.364px;white-space:pre" >/var/lib/libvirt/images/dom.img</text>
<text x="429.50" y="530.80" font-size="15.5" font-weight="normal" fill="#111" font-family="Liberation Sans" style="letter-spacing:0.269px;white-space:pre" >Advanced options</text>
<text x="434.00" y="562.80" font-size="15.5" font-weight="normal" fill="#111" font-family="Liberation Sans" style="letter-spacing:0.378px;white-space:pre" >Virtual network &#39;default&#39; (Inactive): NAT to any device</text>
<text x="447.88" y="595.00" font-size="15.5" font-weight="normal" fill="#111" font-family="Liberation Sans" style="letter-spacing:0.119px;white-space:pre" >Set a fixed mac address</text>
<text x="431.84" y="625.00" font-size="15.5" font-weight="normal" fill="#111" font-family="Liberation Sans" style="letter-spacing:0.243px;white-space:pre" >00:16:36:4a:6</text>
<text x="539.45" y="632.80" font-size="15.5" font-weight="normal" fill="#b4b4b4" font-family="Liberation Sans" style="letter-spacing:0.352px;white-space:pre" >xen (paravirt)</text>
<text x="539.45" y="659.80" font-size="15.5" font-weight="normal" fill="#b4b4b4" font-family="Liberation Sans" style="letter-spacing:0.483px;white-space:pre" >xen (fullvirt)</text>
<text x="454.50" y="659.80" font-size="15.5" font-weight="normal" fill="#111" font-family="Liberation Sans" style="letter-spacing:0.408px;white-space:pre" >Virt Type:</text>
<text x="427.60" y="696.00" font-size="15.5" font-weight="normal" fill="#111" font-family="Liberation Sans" style="letter-spacing:0.730px;white-space:pre" >Architecture:</text>
<text x="536.35" y="696.00" font-size="15.5" font-weight="normal" fill="#111" font-family="Liberation Sans" style="letter-spacing:-0.438px;white-space:pre" >x86_64</text>
<text x="653.62" y="744.00" font-size="15.5" font-weight="normal" fill="#111" font-family="Liberation Sans" style="letter-spacing:0.198px;white-space:pre" >Cancel</text>
<text x="747.66" y="744.00" font-size="15.5" font-weight="normal" fill="#111" font-family="Liberation Sans" style="letter-spacing:0.042px;white-space:pre" >Back</text>
<text x="828.76" y="744.00" font-size="15.5" font-weight="normal" fill="#111" font-family="Liberation Sans" style="letter-spacing:-0.087px;white-space:pre" >Finish</text>
<text x="192.91" y="898.70" font-size="15.5" font-weight="normal" fill="#111" font-family="Liberation Sans" style="letter-spacing:0.239px;white-space:pre" >[VNC config]</text>
<text x="410.20" y="898.70" font-size="15.5" font-weight="normal" fill="#111" font-family="Liberation Sans" style="letter-spacing:0.149px;white-space:pre" >Virtual Machine Manager</text>
<text x="625.16" y="898.70" font-size="15.5" font-weight="normal" fill="#111" font-family="Liberation Sans" style="letter-spacing:-0.198px;white-space:pre" >New VM</text>
</g>
<!-- menu underlines -->
<g stroke="#1a1a1a" stroke-width="1">
  <path d="M373 252.5 H380 M413 252.5 H421.5 M458 252.5 H467 M508 252.5 H517"/>
</g>
</g>

<!-- ================= OUTER BOTTOM PANEL ================= -->
<g id="outerBottom">
<rect x="0" y="999" width="1280" height="25" fill="#ebe9e7"/>
<rect x="0" y="999" width="1280" height="1" fill="#fbfbfb"/>
<rect x="1.5" y="1001.5" width="21" height="20.5" rx="3" fill="#f4f2f0" stroke="#c8c4c0"/>
<g transform="translate(4,1004)">
  <rect x="2" y="2" width="12" height="12" fill="#a8c898" stroke="#4a4a4a" stroke-width="0.8"/>
  <rect x="5" y="5" width="6" height="6" fill="#fff"/>
  <rect x="0" y="0" width="4.5" height="4.5" fill="#3a6ab0"/><rect x="11.5" y="0" width="4.5" height="4.5" fill="#3a6ab0"/>
  <rect x="0" y="11.5" width="4.5" height="4.5" fill="#3a6ab0"/><rect x="11.5" y="11.5" width="4.5" height="4.5" fill="#3a6ab0"/>
  <path d="M7 10 L13 4" stroke="#f0a020" stroke-width="1.8"/>
</g>
<circle cx="29" cy="1006" r="0.9" fill="#c0bcb8"/><circle cx="29" cy="1011.5" r="0.9" fill="#c0bcb8"/><circle cx="29" cy="1017" r="0.9" fill="#c0bcb8"/>
<rect x="35.5" y="1001.5" width="200.5" height="20.5" rx="3" fill="url(#taskG)" stroke="#bcb6b2"/>
<rect x="239.5" y="1001.5" width="199" height="20.5" rx="3" fill="url(#taskG)" stroke="#bcb6b2"/>
<rect x="441.5" y="1001.5" width="199" height="20.5" rx="3" fill="url(#taskG)" stroke="#bcb6b2"/>
<rect x="641.5" y="1001.5" width="203" height="20.5" rx="3" fill="url(#taskG)" stroke="#bcb6b2"/>
<rect x="847.5" y="1001.5" width="201" height="20.5" rx="3" fill="url(#taskAct)" stroke="#a8a29e"/>
<g transform="translate(50,1012) scale(0.75)" opacity="0.6">
  <circle cx="1" cy="-1.5" r="8.5" fill="url(#ffGlobe)"/>
  <path d="M-9 -6 C-12 2 -8 11 1 11.5 C8 11.5 12 5 11 -2 C10 4 6 7 1 7 C-4 7 -6 3 -4 -1 C-3 -3 -1 -3 0 -5 C-2 -5 -4 -6 -4 -8 C-6 -7 -8 -7 -9 -6 Z" fill="url(#ffFox)"/>
</g>
<g transform="translate(245,1004)">
  <rect x="0.5" y="0.5" width="15" height="14" rx="1" fill="#a8a8a8" stroke="#888"/>
  <rect x="2" y="2" width="12" height="10" fill="#d0d0d0"/>
  <path d="M4 5 L6 6.5 L4 8 M7 9 H10" stroke="#666" stroke-width="0.8" fill="none"/>
</g>
<g transform="translate(447,1004)">
  <rect x="0.5" y="0.5" width="15" height="14" rx="1" fill="#3a3a3a" stroke="#888"/>
  <rect x="2" y="2" width="12" height="10" fill="#1e2424"/>
  <path d="M4 5 L6 6.5 L4 8 M7 9 H10" stroke="#e0e0e0" stroke-width="0.8" fill="none"/>
</g>
<g transform="translate(650,1004)">
  <path d="M0.5 2.5 H6 L7.5 4 H15.5 V14.5 H0.5 Z" fill="#9ab8dc" stroke="#6a8ab4"/>
  <path d="M4 9 L8 6 L12 9 V13 H4 Z" fill="#6a8ab4"/>
</g>
<g transform="translate(855,1004)">
  <rect x="0.5" y="0.5" width="14" height="14" fill="#e8e8e4" stroke="#6a7aa0"/>
  <rect x="1" y="1" width="13" height="2" fill="#3a5a98"/>
  <rect x="2" y="4" width="11" height="9" fill="#f4f4f0" stroke="#fff" stroke-width="0.6"/>
</g>
<!-- switcher -->
<rect x="1148" y="1001" width="105" height="22" fill="#aba4a1"/>
<rect x="1148.5" y="1001.5" width="25" height="21" fill="#f4f2f0" stroke="#111" stroke-width="1.2"/>
<g transform="translate(1161,1012) scale(0.78)">
  <circle cx="1" cy="-1.5" r="8.5" fill="url(#ffGlobe)"/>
  <path d="M-9 -6 C-12 2 -8 11 1 11.5 C8 11.5 12 5 11 -2 C10 4 6 7 1 7 C-4 7 -6 3 -4 -1 C-3 -3 -1 -3 0 -5 C-2 -5 -4 -6 -4 -8 C-6 -7 -8 -7 -9 -6 Z" fill="url(#ffFox)"/>
</g>
<rect x="1175" y="1001.5" width="25" height="21" fill="#1ea8f2" stroke="#fff" stroke-width="1"/>
<g transform="translate(1180,1005)">
  <rect x="0.5" y="0.5" width="14" height="12" fill="#e0e0dc" stroke="#6a6a70"/>
  <rect x="1" y="1" width="13" height="2" fill="#3a5a98"/>
  <rect x="2" y="4" width="11" height="7.5" fill="#e4e4e0" stroke="#fff" stroke-width="0.6"/>
</g>
<rect x="1226" y="1001" width="1" height="22" fill="#fbfbfb"/>
<g transform="translate(1257,1003)">
  <path d="M1 4 L2 17 Q2 19 4 19 H15 Q17 19 17 17 L18 4 Z" fill="#4a82cc" stroke="#1e50a0" stroke-width="1.2"/>
  <path d="M1 2 Q1 0.5 3 0.5 H16 Q18 0.5 18 2 V5 H1 Z" fill="#2a5494" stroke="#1e50a0" stroke-width="1"/>
</g>
</g>

<g opacity="0.999">
<text x="64.02" y="1016.50" font-size="14" font-weight="normal" fill="#111" font-family="Liberation Sans" style="letter-spacing:0.859px;white-space:pre" >[Setup Libvirt 0.7.0-6 ...</text>
<text x="268.02" y="1016.50" font-size="14" font-weight="normal" fill="#111" font-family="Liberation Sans" style="letter-spacing:0.794px;white-space:pre" >[root@Server1-FC11:~]</text>
<text x="470.16" y="1016.50" font-size="14" font-weight="normal" fill="#111" font-family="Liberation Sans" style="letter-spacing:0.686px;white-space:pre" >root@Server1-FC11:/...</text>
<text x="674.02" y="1016.50" font-size="14" font-weight="normal" fill="#111" font-family="Liberation Sans" style="letter-spacing:0.827px;white-space:pre" >[fasiha]</text>
<text x="877.72" y="1016.50" font-size="14" font-weight="normal" fill="#111" font-family="Liberation Sans" style="letter-spacing:0.445px;white-space:pre" >TigerVNC: Server1-FC...</text>
</g>
<!-- mouse cursor -->
<path d="M680.5 636 V652 L684 648.5 L686.8 654.5 L689.2 653.5 L686.5 647.6 L691.8 647.6 Z" fill="#141a38" stroke="#ffffff" stroke-width="1" stroke-linejoin="round"/>
</svg>

</body></html>
